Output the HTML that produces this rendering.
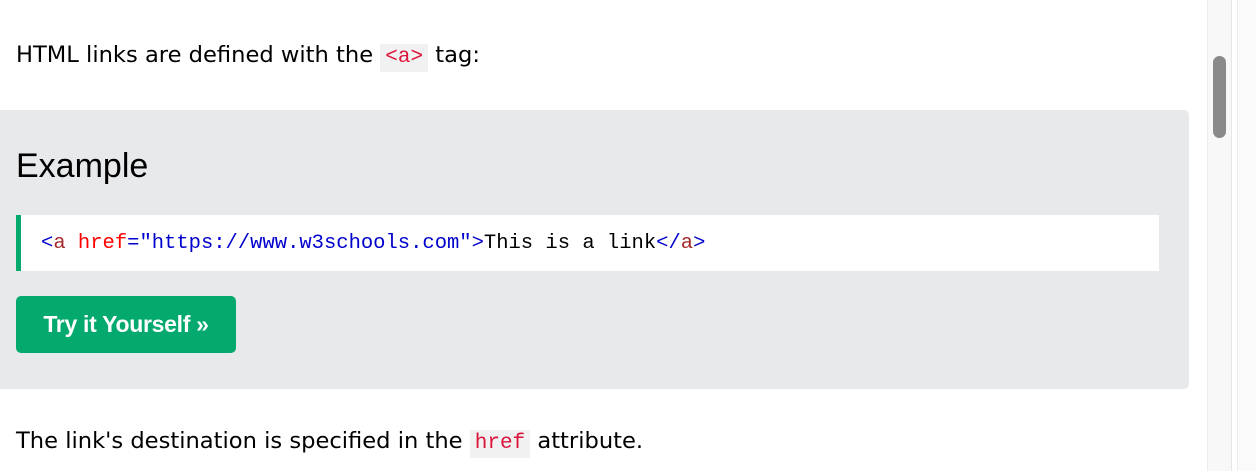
<!DOCTYPE html>
<html><head><style>
*{margin:0;padding:0;box-sizing:border-box}
body{width:1256px;height:471px;background:#fff;position:relative;overflow:hidden;font-family:"DejaVu Sans","Liberation Sans",sans-serif;font-size:22.6px;color:#000}
.p{position:absolute;left:16px;white-space:nowrap;line-height:28px}
code.i{font-family:"Liberation Mono",monospace;font-size:21px;color:#dc143c;background:#f1f1f1;padding:0 5px;display:inline-block;line-height:28px}
.box{position:absolute;left:0;top:110px;width:1189px;height:279px;background:#e7e9eb;border-radius:0 5px 5px 0}
h2{position:absolute;left:16px;top:146px;font-family:"Liberation Sans",sans-serif;font-weight:normal;font-size:34px;line-height:40px}
.code{position:absolute;left:16px;top:215px;width:1143px;height:56px;background:#fff;border-left:5px solid #04aa6d;font-family:"Liberation Mono",monospace;font-size:20.5px;line-height:58px;padding-left:20px;white-space:nowrap;color:#000}
.b{color:#0000cd}.r{color:#ff0000}.m{color:#a52a2a}
.btn{position:absolute;left:16px;top:296px;width:220px;height:57px;background:#04aa6d;border-radius:5px;color:#fff;font-family:"Liberation Sans",sans-serif;font-weight:bold;font-size:23px;line-height:57px;text-align:center;letter-spacing:-0.3px}
.sb{position:absolute;left:1207px;top:0;width:25px;height:471px;background:#f8f8f8;border-left:1px solid #ececec;border-right:1px solid #e6e6e6}
.th{position:absolute;left:1213px;top:56px;width:13px;height:82px;background:#8a8a8a;border-radius:7px}
.sb2{position:absolute;left:1237px;top:0;width:19px;height:471px;background:#fafafa;border-left:1px solid #ececec}
</style></head><body>
<div class="p" style="top:41px">HTML links are defined with the <code class="i">&lt;a&gt;</code> tag:</div>
<div class="box"></div>
<h2>Example</h2>
<div class="code"><span class="b">&lt;</span><span class="m">a</span><span class="r"> href</span><span class="b">="https://www.w3schools.com"&gt;</span>This is a link<span class="b">&lt;/</span><span class="m">a</span><span class="b">&gt;</span></div>
<div class="btn">Try it Yourself »</div>
<div class="p" style="top:427px">The link's destination is specified in the <code class="i">href</code> attribute.</div>
<div class="sb"></div><div class="sb2"></div><div class="th"></div>
</body></html>
